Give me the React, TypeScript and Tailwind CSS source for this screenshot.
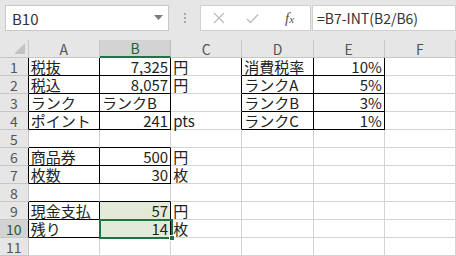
import React from "react";

type Cell = { v: string; align?: "l" | "r" };

const COLS = ["A", "B", "C", "D", "E", "F"];

const DATA: Record<number, (Cell | null)[]> = {
  1: [{ v: "税抜" }, { v: "7,325", align: "r" }, { v: "円" }, { v: "消費税率" }, { v: "10%", align: "r" }, null],
  2: [{ v: "税込" }, { v: "8,057", align: "r" }, { v: "円" }, { v: "ランクA" }, { v: "5%", align: "r" }, null],
  3: [{ v: "ランク" }, { v: "ランクB" }, null, { v: "ランクB" }, { v: "3%", align: "r" }, null],
  4: [{ v: "ポイント" }, { v: "241", align: "r" }, { v: "pts" }, { v: "ランクC" }, { v: "1%", align: "r" }, null],
  6: [{ v: "商品券" }, { v: "500", align: "r" }, { v: "円" }, null, null, null],
  7: [{ v: "枚数" }, { v: "30", align: "r" }, { v: "枚" }, null, null, null],
  9: [{ v: "現金支払" }, { v: "57", align: "r" }, { v: "円" }, null, null, null],
  10: [{ v: "残り" }, { v: "14", align: "r" }, { v: "枚" }, null, null, null],
};

const RANGES = [
  [1, 4, 0, 1],
  [1, 4, 3, 4],
  [6, 7, 0, 1],
  [9, 10, 0, 1],
];

function inRange(r: number, c: number) {
  return RANGES.some(([r1, r2, c1, c2]) => r >= r1 && r <= r2 && c >= c1 && c <= c2);
}

const FONT = { fontFamily: '"Noto Sans CJK JP", "Noto Sans", sans-serif' };

export default function App() {
  const rows = Array.from({ length: 11 }, (_, i) => i + 1);
  return (
    <div className="w-[456px] h-[256px] overflow-hidden bg-white text-[#222]" style={FONT}>
      {/* formula bar */}
      <div className="h-[40px] bg-[#e6e6e6] flex items-start pt-[5px] pl-[5px]">
        <div className="w-[164px] h-[26px] bg-white border border-[#c8c8c8] flex items-center justify-between pl-[6px] pr-[5px]">
          <span className="text-[15px] text-[#333] leading-none">B10</span>
          <svg width="9" height="6" viewBox="0 0 9 6">
            <path d="M0 0 L9 0 L4.5 5 Z" fill="#7a7a7a" />
          </svg>
        </div>
        <div className="w-[31px] h-[26px] flex flex-col items-center justify-center gap-[2px]">
          <div className="w-[2px] h-[2px] bg-[#a8a8a8]" />
          <div className="w-[2px] h-[2px] bg-[#a8a8a8]" />
          <div className="w-[2px] h-[2px] bg-[#a8a8a8]" />
        </div>
        <div className="w-[111px] h-[26px] bg-white border border-[#d0d0d0] flex items-center">
          <svg className="ml-[12px]" width="12" height="12" viewBox="0 0 12 12">
            <path d="M1 1 L11 11 M11 1 L1 11" stroke="#bdbdbd" strokeWidth="1.3" />
          </svg>
          <svg className="ml-[21px]" width="13" height="11" viewBox="0 0 13 11">
            <path d="M1 6 L4.5 9.5 L12 1.5" stroke="#bdbdbd" strokeWidth="1.3" fill="none" />
          </svg>
          <span
            className="ml-[26px] text-[15px] italic text-[#555] leading-none"
            style={{ fontFamily: '"Liberation Serif", serif' }}
          >
            f<span className="text-[11px]">x</span>
          </span>
        </div>
        <div className="ml-[1px] flex-1 h-[26px] bg-white border border-[#d0d0d0] flex items-center pl-[4px]">
          <span className="text-[14px] text-[#333] leading-none whitespace-nowrap">=B7-INT(B2/B6)</span>
        </div>
      </div>

      {/* grid */}
      <div className="relative">
        {/* column header */}
        <div className="flex h-[18px]">
          <div className="w-[29px] h-[18px] bg-[#e6e6e6] border-r border-b border-[#c6c6c6] flex items-end justify-end pr-[3px] pb-[3px]">
            <svg width="11" height="11" viewBox="0 0 11 11">
              <path d="M11 0 L11 11 L0 11 Z" fill="#c2c2c2" />
            </svg>
          </div>
          {COLS.map((c) =>
            c === "B" ? (
              <div
                key={c}
                className="w-[72px] h-[18px] bg-[#d3d3d3] border-r border-[#bdbdbd] border-b-2 border-b-[#217346] flex items-center justify-center text-[14px] text-[#1e5e3a] leading-none"
              >
                {c}
              </div>
            ) : (
              <div
                key={c}
                className="w-[72px] h-[18px] bg-[#e6e6e6] border-r border-b border-[#c6c6c6] flex items-center justify-center text-[14px] text-[#555] leading-none"
              >
                {c}
              </div>
            )
          )}
        </div>
        {rows.map((r) => {
          const sel = r === 10;
          return (
            <div key={r} className="flex h-[18px]">
              <div
                className={
                  "w-[29px] h-[18px] border-b border-r flex items-center justify-center text-[14px] leading-none " +
                  (sel ? "bg-[#d3d3d3] text-[#1e5e3a] border-b-[#c6c6c6] " : "bg-[#e6e6e6] text-[#555] border-b-[#c6c6c6] ") +
                  (inRange(r, 0) ? "border-r-black" : "border-r-[#c6c6c6]")
                }
              >
                {r}
              </div>
              {COLS.map((_, c) => {
                const cell = DATA[r]?.[c] ?? null;
                const rightBlack = inRange(r, c) || inRange(r, c + 1);
                const bottomBlack = inRange(r, c) || inRange(r + 1, c);
                const fill = c === 1 && (r === 9 || r === 10);
                return (
                  <div
                    key={c}
                    className={
                      "w-[72px] h-[18px] border-r border-b flex items-center overflow-visible whitespace-nowrap text-[15px] leading-none " +
                      (rightBlack ? "border-r-black " : "border-r-[#d4d4d4] ") +
                      (bottomBlack ? "border-b-black " : "border-b-[#d4d4d4] ") +
                      (fill ? "bg-[#e2ebd8] " : "") +
                      (cell?.align === "r" ? "justify-end pr-[2px]" : "justify-start pl-[2px]")
                    }
                  >
                    {cell?.v ?? ""}
                  </div>
                );
              })}
            </div>
          );
        })}
        {/* selection B10 */}
        <div className="absolute left-[99px] top-[179px] w-[74px] h-[20px] border-2 border-[#217346] pointer-events-none" />
        <div className="absolute left-[169px] top-[195px] w-[6px] h-[6px] bg-[#217346] border border-white pointer-events-none" />
      </div>
    </div>
  );
}
